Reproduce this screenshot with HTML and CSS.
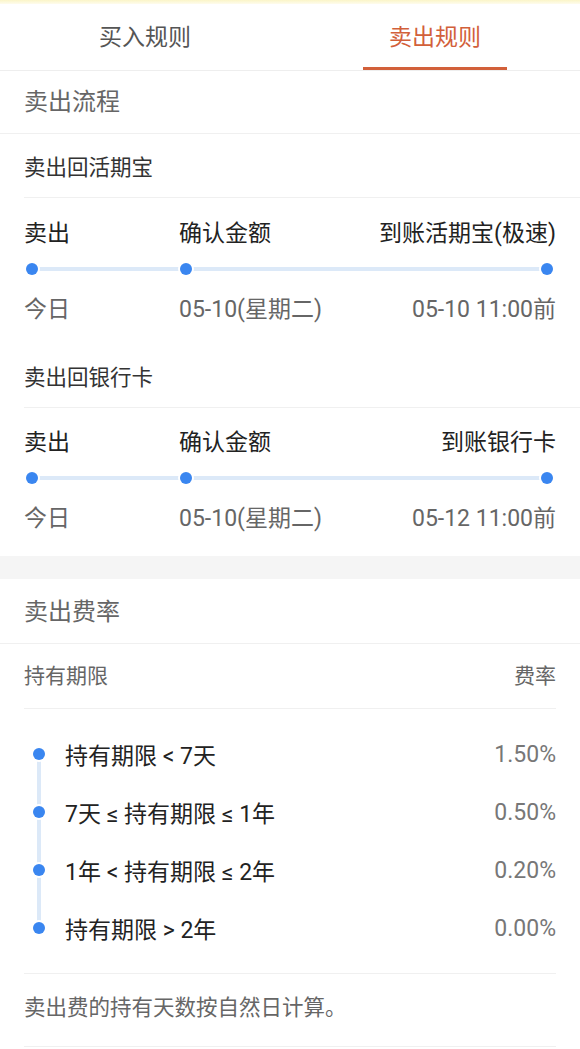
FILE: index.html
```html
<!DOCTYPE html>
<html lang="zh-CN">
<head>
<meta charset="utf-8">
<title>卖出规则</title>
<link rel="stylesheet" href="styles.css">
</head>
<body>
<div class="page">
  <div class="topstrip"></div>
  <div class="tabs">
    <div class="tab"><span class="tab-label">买入规则</span></div>
    <div class="tab"><span class="tab-label active">卖出规则</span></div>
  </div>

  <div class="section-title">卖出流程</div>

  <div class="sub-title">卖出回活期宝</div>
  <div class="flow first">
    <div class="flow-row labels">
      <span>卖出</span><span>确认金额</span><span class="end">到账活期宝(极速)</span>
    </div>
    <div class="flow-row dots">
      <i class="dot d1"></i><i class="dot d2"></i><i class="dot d3"></i>
    </div>
    <div class="flow-row dates">
      <span>今日</span><span>05-10(星期二)</span><span class="end">05-10 11:00前</span>
    </div>
  </div>

  <div class="sub-title">卖出回银行卡</div>
  <div class="flow last">
    <div class="flow-row labels">
      <span>卖出</span><span>确认金额</span><span class="end">到账银行卡</span>
    </div>
    <div class="flow-row dots">
      <i class="dot d1"></i><i class="dot d2"></i><i class="dot d3"></i>
    </div>
    <div class="flow-row dates">
      <span>今日</span><span>05-10(星期二)</span><span class="end">05-12 11:00前</span>
    </div>
  </div>

  <div class="gap"></div>

  <div class="section-title fee">卖出费率</div>
  <div class="fee-head"><span>持有期限</span><span>费率</span></div>
  <div class="fee-list">
    <div class="fee-row first"><span class="marker"><i class="dot"></i></span><span class="term">持有期限 &lt; 7天</span><span class="rate">1.50%</span></div>
    <div class="fee-row"><span class="marker"><i class="dot"></i></span><span class="term">7天 ≤ 持有期限 ≤ 1年</span><span class="rate">0.50%</span></div>
    <div class="fee-row"><span class="marker"><i class="dot"></i></span><span class="term">1年 &lt; 持有期限 ≤ 2年</span><span class="rate">0.20%</span></div>
    <div class="fee-row last"><span class="marker"><i class="dot"></i></span><span class="term">持有期限 &gt; 2年</span><span class="rate">0.00%</span></div>
  </div>
  <div class="footer">卖出费的持有天数按自然日计算。</div>
</div>
</body>
</html>
```

FILE: styles.css
```css
* { box-sizing: border-box; margin: 0; padding: 0; }
html, body { background: #fff; }
body {
  font-family: Roboto, "Noto Sans CJK SC", sans-serif;
  color: #222;
}
.page { width: 580px; }

.topstrip {
  height: 4px;
  background: linear-gradient(#fbf5c8, #fefcee);
}

.tabs {
  display: flex;
  height: 67px;
  border-bottom: 1px solid #eeeeee;
}
.tab {
  flex: 1;
  display: flex;
  justify-content: center;
}
.tab-label {
  width: 144px;
  display: flex;
  align-items: center;
  justify-content: center;
  font-size: 23px;
  color: #555;
  padding-bottom: 1px;
  border-bottom: 3px solid transparent;
}
.tab-label.active {
  color: #d2603a;
  border-bottom-color: #d2603a;
}

.section-title {
  height: 63px;
  line-height: 62px;
  padding-left: 24px;
  font-size: 24px;
  color: #666;
  border-bottom: 1px solid #f0f0f0;
}
.section-title.fee { height: 65px; padding-top: 2px; line-height: 62px; }

.sub-title {
  height: 64px;
  padding-top: 5px;
  line-height: 58px;
  margin-left: 24px;
  font-size: 21.5px;
  color: #333;
  border-bottom: 1px solid #f0f0f0;
}

.flow { padding: 13px 24px 19px; }
.flow.first { padding-top: 14px; padding-bottom: 18px; }
.flow.last { padding-bottom: 21px; }
.flow-row {
  display: grid;
  grid-template-columns: 155px 1fr auto;
  height: 38px;
  align-items: center;
}
.flow-row .end { justify-self: end; }
.labels { font-size: 23px; color: #222; }
.dates { font-size: 23px; color: #666; }

.dots {
  background: linear-gradient(#dce9f8, #dce9f8) no-repeat;
  background-size: calc(100% - 17px) 4px;
  background-position: 8px center;
}
.dot {
  display: block;
  width: 12px;
  height: 12px;
  border-radius: 50%;
  background: #3a86f0;
  box-shadow: 0 0 0 2px #fff;
}
.dots .d1 { margin-left: 2px; }
.dots .d2 { margin-left: 1px; }
.dots .d3 { justify-self: end; margin-right: 3px; }

.gap { height: 23px; background: #f5f5f5; }

.fee-head {
  display: flex;
  justify-content: space-between;
  height: 65px;
  line-height: 65px;
  margin: 0 24px;
  font-size: 21px;
  color: #666;
  border-bottom: 1px solid #f0f0f0;
}

.fee-list { padding: 16px 24px 16px; }
.fee-row {
  display: flex;
  align-items: center;
  height: 58px;
}
.marker {
  width: 30px;
  height: 100%;
  display: flex;
  align-items: center;
  justify-content: center;
  margin-right: 11px;
  background: linear-gradient(#dce9f8, #dce9f8) no-repeat center / 4px 100%;
}
.fee-row.first .marker { background-position: center bottom; background-size: 4px 50%; }
.fee-row.last .marker { background-position: center top; background-size: 4px 50%; }
.term { flex: 1; font-size: 23px; color: #222; }
.rate { font-size: 23px; color: #777; }

.footer {
  height: 74px;
  line-height: 68px;
  margin: 0 24px;
  font-size: 21.5px;
  color: #666;
  border-top: 1px solid #f0f0f0;
  border-bottom: 1px solid #f0f0f0;
}
```
